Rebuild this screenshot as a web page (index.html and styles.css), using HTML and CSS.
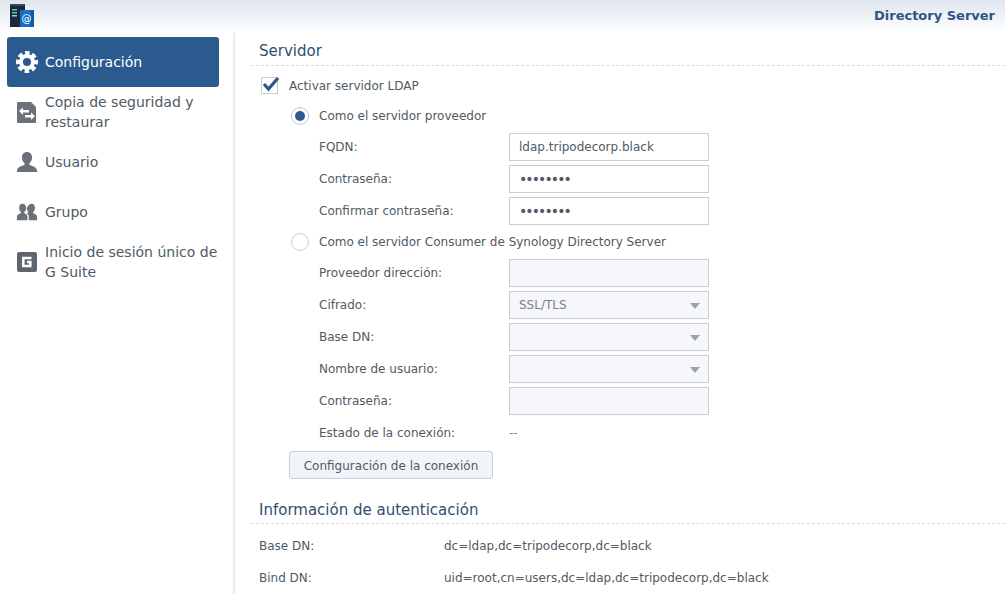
FILE: index.html
```html
<!DOCTYPE html>
<html>
<head>
    <title>Directory Server</title>
    <link rel="stylesheet" href="styles.css">
</head>
<body>
    <header class="topbar">
        <svg class="app-icon" width="26" height="28" viewBox="0 0 26 28">
            <rect x="1" y="4" width="15" height="23" fill="#1c2740"/>
            <rect x="1" y="4" width="15" height="2" fill="#3a4560"/>
            <rect x="3" y="9" width="5" height="1.5" fill="#5fd08a"/>
            <rect x="3" y="12" width="5" height="1.5" fill="#5fd08a"/>
            <rect x="3" y="15" width="5" height="1.5" fill="#9fc7e8"/>
            <rect x="11" y="10" width="14" height="17" fill="#1470c4"/>
            <rect x="22" y="10" width="3" height="17" fill="#0f5aa3"/>
            <text x="17.500" y="22" class="app-at">@</text>
        </svg>
        <span class="app-title">Directory Server</span>
    </header>

    <div class="layout">
        <nav class="sidebar">
            <a class="nav-item active">
                <svg class="nav-icon" width="22" height="22" viewBox="0 0 22 22">
                    <circle cx="11" cy="11" r="8" fill="#fff"/>
                    <circle cx="11" cy="11" r="9" fill="none" stroke="#fff" stroke-width="4" stroke-dasharray="4.400 2.670" stroke-dashoffset="2.200"/>
                    <circle cx="11" cy="11" r="4" fill="#2b5a8e"/>
                </svg>
                <span>Configuración</span>
            </a>
            <a class="nav-item">
                <svg class="nav-icon" width="22" height="24" viewBox="0 0 22 24">
                    <path fill="#6b7178" d="M2 2h13l5 5v15a1 1 0 0 1-1 1H2a1 1 0 0 1-1-1V3a1 1 0 0 1 1-1z"/>
                    <path fill="#fff" d="M3 11l4-3.500V10h6v2.500H7V15zM19 16l-4-3.500V15H9v2.500h6V20z"/>
                </svg>
                <span>Copia de seguridad y restaurar</span>
            </a>
            <a class="nav-item">
                <svg class="nav-icon" width="24" height="24" viewBox="0 0 24 24">
                    <path fill="#6b7178" d="M12 1c3.600 0 5.500 2.700 5.500 6 0 2.700-1.200 5-2.800 6.200v1.800c2.500 1.200 8.300 2.500 8.300 6.500v1.500H1V21.500c0-4 5.800-5.300 8.300-6.500v-1.800C7.700 12 6.500 9.700 6.500 7c0-3.300 1.900-6 5.500-6z"/>
                </svg>
                <span>Usuario</span>
            </a>
            <a class="nav-item">
                <svg class="nav-icon" width="24" height="20" viewBox="0 0 24 20">
                    <path fill="#6b7178" d="M7 1c2.700 0 4 2 4 4.500 0 2-.9 3.700-2 4.500v1.200c1.800.9 3.500 1.700 3.500 4.300V19H1v-3.500c0-2.600 2.700-3.400 4.500-4.300V10c-1.100-.8-2-2.500-2-4.500C3.500 3 4.300 1 7 1z"/>
                    <path fill="#6b7178" d="M17 1c2.700 0 3.700 2 3.700 4.500 0 2-.9 3.700-2 4.500v1.200c1.800.9 4.300 1.700 4.300 4.300V19h-9v-3.500c0-2-1-3.200-2.300-4.200.6-.3 1.600-.4 2-.8V10c-1.100-.8-2-2.500-2-4.500C13.700 3 14.300 1 17 1z"/>
                </svg>
                <span>Grupo</span>
            </a>
            <a class="nav-item">
                <svg class="nav-icon" width="22" height="22" viewBox="0 0 22 22">
                    <rect x="1" y="1" width="20" height="20" rx="2" fill="#5f656d"/>
                    <path fill="none" stroke="#fff" stroke-width="2.600" d="M15.500 7H7.300v8h7v-4H11"/>
                </svg>
                <span>Inicio de sesión único de G Suite</span>
            </a>
        </nav>

        <main class="content">
            <h3 class="section-title">Servidor</h3>

            <div class="check-row">
                <span class="checkbox">
                    <svg width="21" height="19" viewBox="0 0 21 19"><path fill="none" stroke="#2b5a8e" stroke-width="3.200" d="M4 9l4.500 5L18 3"/></svg>
                </span>
                <span>Activar servidor LDAP</span>
            </div>

            <div class="form-group">
                <div class="radio-row">
                    <span class="radio checked"></span>
                    <span>Como el servidor proveedor</span>
                </div>
                <div class="form-row"><label>FQDN:</label><div class="field">ldap.tripodecorp.black</div></div>
                <div class="form-row"><label>Contraseña:</label><div class="field dots">••••••••</div></div>
                <div class="form-row"><label>Confirmar contraseña:</label><div class="field dots">••••••••</div></div>

                <div class="radio-row">
                    <span class="radio"></span>
                    <span>Como el servidor Consumer de Synology Directory Server</span>
                </div>
                <div class="form-row"><label>Proveedor dirección:</label><div class="field disabled"></div></div>
                <div class="form-row"><label>Cifrado:</label><div class="field disabled select">SSL/TLS</div></div>
                <div class="form-row"><label>Base DN:</label><div class="field disabled select"></div></div>
                <div class="form-row"><label>Nombre de usuario:</label><div class="field disabled select"></div></div>
                <div class="form-row"><label>Contraseña:</label><div class="field disabled"></div></div>
                <div class="form-row"><label>Estado de la conexión:</label><div class="value-muted">--</div></div>
            </div>

            <button class="btn">Configuración de la conexión</button>

            <h3 class="section-title second">Información de autenticación</h3>

            <div class="info-row"><label>Base DN:</label><div>dc=ldap,dc=tripodecorp,dc=black</div></div>
            <div class="info-row"><label>Bind DN:</label><div>uid=root,cn=users,dc=ldap,dc=tripodecorp,dc=black</div></div>
        </main>
    </div>
</body>
</html>
```

FILE: styles.css
```css
html, body {
    height: 100%;
}
body {
    margin: 0;
    overflow: hidden;
    font-family: "DejaVu Sans", Verdana, sans-serif;
    font-size: 12px;
    color: #505a64;
    background-color: #fff;
}
.topbar {
    height: 33px;
    padding: 0 10px 0 9px;
    display: flex;
    justify-content: space-between;
    align-items: flex-start;
    box-sizing: border-box;
    background: linear-gradient(#dfe6ef, #fff);
}
.app-at {
    font-size: 10px;
    fill: #fff;
    text-anchor: middle;
}
.app-title {
    margin-top: 8px;
    font-size: 13px;
    font-weight: bold;
    color: #2f5482;
}
.layout {
    display: flex;
    height: 561px;
}
.sidebar {
    width: 235px;
    padding: 4px 14px 0 7px;
    box-sizing: border-box;
    border-right: 2px solid #e8ecf0;
    flex-shrink: 0;
}
.nav-item {
    height: 50px;
    display: flex;
    align-items: center;
    gap: 7px;
    padding-left: 9px;
    font-size: 14px;
    line-height: 20px;
    color: #505a64;
    border-radius: 3px;
}
.nav-item span {
    width: 176px;
    flex-shrink: 0;
}
.nav-item.active {
    background-color: #2b5a8e;
    color: #fff;
}
.nav-icon {
    flex: 0 0 auto;
    width: 22px;
}
.content {
    flex: 1;
    padding: 0 0 0 16px;
    min-width: 0;
}
.section-title {
    margin: 0;
    height: 32px;
    line-height: 36px;
    padding-left: 8px;
    font-size: 15px;
    font-weight: normal;
    color: #2f4f73;
    border-bottom: 1px dashed #d5dde3;
}
.section-title.second {
    margin-top: 12px;
    margin-bottom: 6px;
    line-height: 38px;
}
.check-row, .radio-row {
    display: flex;
    align-items: center;
}
.check-row {
    padding-left: 10px;
    margin-top: 4px;
    height: 31px;
    gap: 11px;
}
.checkbox {
    width: 17px;
    height: 17px;
    border: 1px solid #c5ced6;
    box-sizing: border-box;
    position: relative;
}
.checkbox svg {
    position: absolute;
    left: -2px;
    top: -3px;
}
.form-group {
    padding-left: 40px;
}
.radio-row {
    height: 28px;
    padding-top: 2px;
    box-sizing: border-box;
    margin-bottom: 2px;
    gap: 10px;
}
.radio {
    width: 18px;
    height: 18px;
    border: 1px solid #c5ced6;
    border-radius: 50%;
    box-sizing: border-box;
    position: relative;
    background-color: #fff;
}
.radio.checked::after {
    content: "";
    position: absolute;
    left: 3px;
    top: 3px;
    width: 10px;
    height: 10px;
    border-radius: 50%;
    background-color: #2b5a8e;
}
.form-row {
    display: flex;
    align-items: center;
    height: 32px;
    padding-left: 28px;
}
.form-row label {
    width: 190px;
}
.field {
    width: 200px;
    height: 28px;
    line-height: 26px;
    padding: 0 9px;
    box-sizing: border-box;
    border: 1px solid #c8d0d6;
    color: #505a64;
}
.field.dots {
    font-size: 14px;
    letter-spacing: -1.900px;
}
.field.disabled {
    background-color: #f5f7fa;
    color: #7d8287;
    position: relative;
}
.field.select::after {
    content: "";
    position: absolute;
    right: 8px;
    top: 11px;
    border-left: 5px solid transparent;
    border-right: 5px solid transparent;
    border-top: 6px solid #9aa1a8;
}
.value-muted {
    color: #808890;
}
.btn {
    display: block;
    margin: 2px 0 0 38px;
    width: 204px;
    height: 28px;
    padding: 1px 0 0;
    font-family: inherit;
    font-size: 12px;
    color: #505a64;
    background-color: #f0f5fa;
    border: 1px solid #c5ced6;
    border-radius: 3px;
}
.info-row {
    display: flex;
    align-items: center;
    height: 32px;
    padding-left: 8px;
}
.info-row label {
    width: 185px;
}
```
